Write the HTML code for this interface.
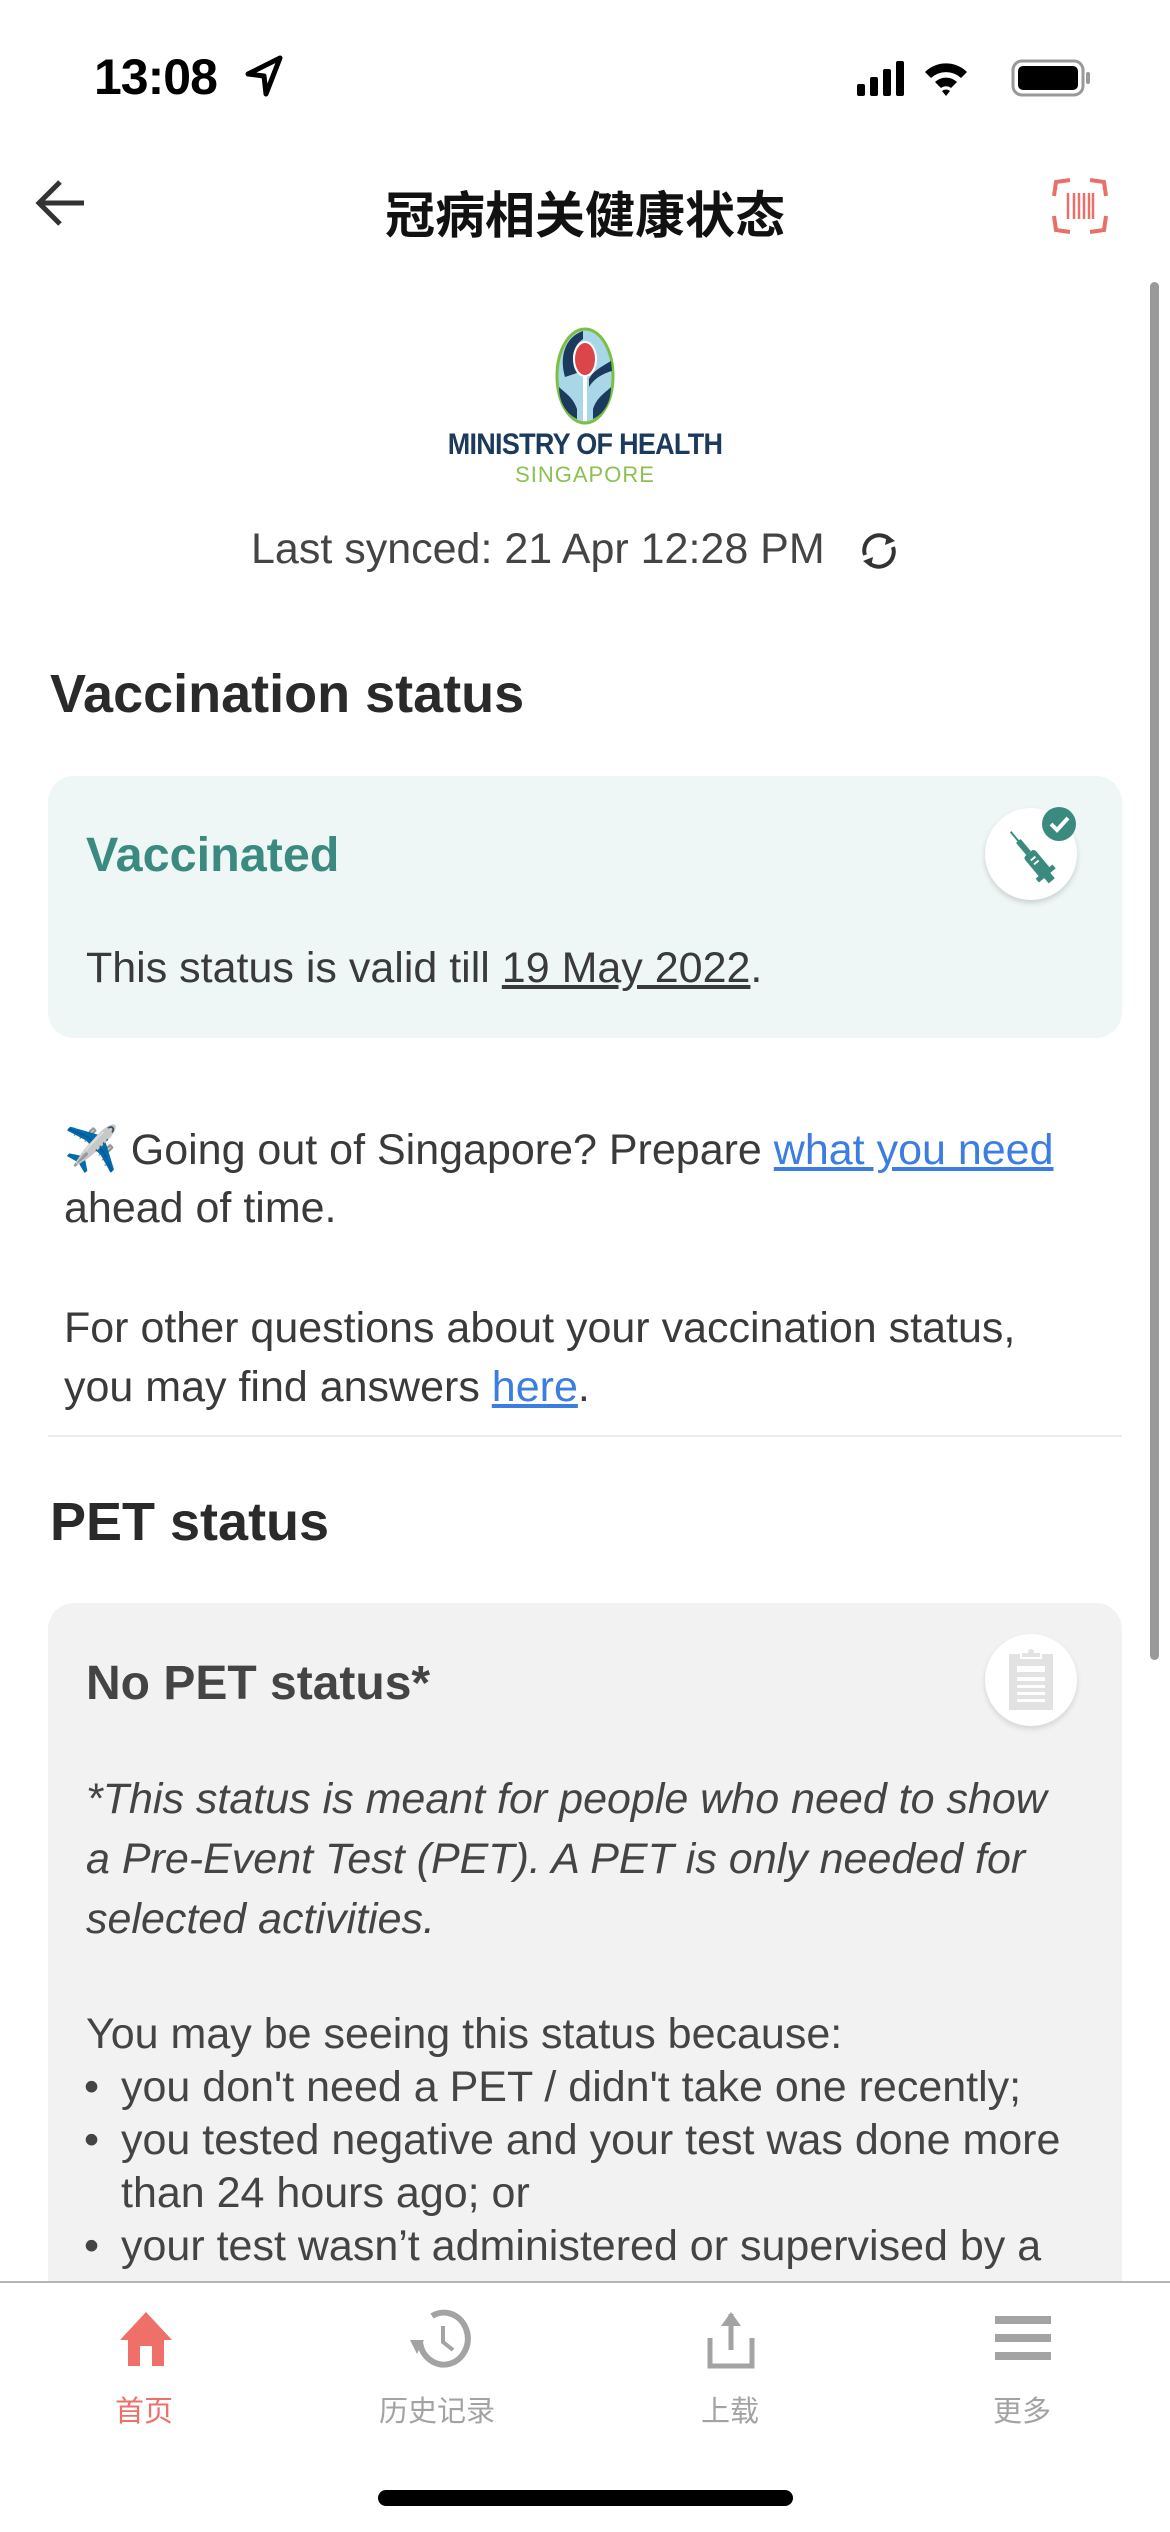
<!DOCTYPE html>
<html><head><meta charset="utf-8"><style>
*{margin:0;padding:0;box-sizing:border-box}
body{width:1170px;height:2532px;background:#fff;position:relative;overflow:hidden;font-family:"Liberation Sans","Noto Sans CJK SC",sans-serif;color:#333}
.a{position:absolute;white-space:nowrap}
.t{font-size:43px;color:#3a3a3a}
a{color:#3b7de0;text-decoration:underline}
</style></head><body>
<!-- status bar -->
<div class="a" style="left:94px;top:48px;font-size:50px;font-weight:bold;color:#000;letter-spacing:-1px">13:08</div>
<svg class="a" style="left:244px;top:54px" width="40" height="44" viewBox="0 0 40 44"><path d="M36 4 L4 20 L20 22 L22 40 Z" fill="none" stroke="#000" stroke-width="5" stroke-linejoin="round"/></svg>
<svg class="a" style="left:855px;top:58px" width="240" height="40" viewBox="0 0 240 40">
<rect x="2" y="26" width="8" height="12" rx="2" fill="#000"/><rect x="15" y="19" width="8" height="19" rx="2" fill="#000"/><rect x="28" y="11" width="8" height="27" rx="2" fill="#000"/><rect x="41" y="3" width="8" height="35" rx="2" fill="#000"/>
<path d="M70 14 A30 30 0 0 1 112 14 L106 20 A22 22 0 0 0 76 20Z M80 24 A16 16 0 0 1 102 24 L96 30 A8 8 0 0 0 86 30Z M91 38 L87 33 A6 6 0 0 1 95 33Z" fill="#000"/>
<rect x="158" y="3" width="70" height="34" rx="9" fill="none" stroke="#999" stroke-width="3"/><rect x="163" y="8" width="60" height="24" rx="5" fill="#000"/><rect x="231" y="14" width="4" height="12" rx="2" fill="#999"/></svg>
<!-- header -->
<svg class="a" style="left:34px;top:178px" width="54" height="50" viewBox="0 0 54 50"><path d="M50 25 H6 M26 4 L5 25 L26 46" fill="none" stroke="#333" stroke-width="5"/></svg>
<div class="a" style="left:0;width:1170px;text-align:center;top:176px;font-size:50px;font-weight:bold;color:#111">冠病相关健康状态</div>
<svg class="a" style="left:1050px;top:176px" width="60" height="60" viewBox="0 0 60 60"><path d="M20 4 L6 6 L4 20 M40 4 L54 6 L56 20 M4 40 L6 54 L20 56 M56 40 L54 54 L40 56" fill="none" stroke="#e87068" stroke-width="4"/><g stroke="#e87068" stroke-width="2.5"><path d="M18 17V43M24 17V43M29 17V43M34 17V43M39 17V43M43 17V43"/></g></svg>
<div class="a" style="left:1150px;top:282px;width:9px;height:1378px;background:#9a9a9a;border-radius:5px"></div>
<!-- logo -->
<svg class="a" style="left:555px;top:327px" width="60" height="98" viewBox="0 0 60 98">
<ellipse cx="30" cy="49" rx="28" ry="47" fill="#a9d7e8" stroke="#7bc043" stroke-width="3"/>
<path d="M28 4 C10 10 4 30 10 50 L22 46 C16 36 16 20 28 12Z" fill="#1b3a5c"/>
<path d="M4 60 C10 66 18 70 22 82 L22 92 C10 86 4 74 4 60Z M56 60 C50 66 42 70 38 82 L38 92 C50 86 56 74 56 60Z" fill="#1b3a5c"/>
<path d="M56 34 C46 40 38 44 34 52 L34 60 C40 50 50 46 57 44Z" fill="#1b3a5c"/>
<ellipse cx="30" cy="32" rx="11" ry="17" fill="#dc4549" stroke="#fff" stroke-width="2"/>
<rect x="28" y="50" width="4" height="44" fill="#fff"/></svg>
<div class="a" style="left:0;width:1170px;text-align:center;top:428px;font-size:30px;font-weight:bold;color:#1b3a5c;letter-spacing:-0.8px;transform:scaleX(0.9)">MINISTRY OF HEALTH</div>
<div class="a" style="left:0;width:1170px;text-align:center;top:462px;font-size:22px;color:#8cc152;letter-spacing:1px">SINGAPORE</div>
<div class="a t" style="left:251px;top:525px;color:#444">Last synced: 21 Apr 12:28 PM</div>
<svg class="a" style="left:855px;top:527px" width="48" height="48" viewBox="0 0 48 48"><path d="M10 28 A15 15 0 0 1 36 14 M38 20 A15 15 0 0 1 12 34" fill="none" stroke="#333" stroke-width="4"/><path d="M32 8 L40 14 L30 18Z M16 40 L8 34 L18 30Z" fill="#333"/></svg>
<!-- vaccination -->
<div class="a" style="left:50px;top:663px;font-size:54px;font-weight:bold;color:#2a2a2a">Vaccination status</div>
<div class="a" style="left:48px;top:776px;width:1074px;height:262px;background:#eef7f5;border-radius:26px"></div>
<div class="a" style="left:86px;top:827px;font-size:48.5px;font-weight:bold;color:#3b8a80">Vaccinated</div>
<div class="a t" style="left:86px;top:944px">This status is valid till <u>19 May 2022</u>.</div>
<div class="a" style="left:985px;top:808px;width:92px;height:92px;border-radius:50%;background:#fff;box-shadow:0 3px 6px rgba(0,0,0,.15)"></div>
<svg class="a" style="left:995px;top:816px" width="80" height="80" viewBox="0 0 80 80"><g transform="rotate(-40 38 44)"><rect x="32" y="36" width="14" height="26" rx="3" fill="#3b8a80"/><rect x="36" y="20" width="6" height="16" fill="#3b8a80"/><rect x="38" y="8" width="2" height="14" fill="#3b8a80"/><rect x="28" y="60" width="22" height="5" fill="#3b8a80"/><rect x="35" y="64" width="8" height="8" fill="#3b8a80"/><rect x="36" y="42" width="6" height="2" fill="#fff"/><rect x="36" y="47" width="6" height="2" fill="#fff"/></g></svg>
<svg class="a" style="left:1041px;top:806px" width="36" height="36" viewBox="0 0 36 36"><circle cx="18" cy="18" r="17" fill="#3b8a80"/><path d="M10 18 L16 24 L27 12" fill="none" stroke="#fff" stroke-width="4"/></svg>
<div class="a t" style="left:64px;top:1123px"><span style="font-size:44px">✈️</span> Going out of Singapore? Prepare <a>what you need</a></div>
<div class="a t" style="left:64px;top:1184px">ahead of time.</div>
<div class="a t" style="left:64px;top:1304px">For other questions about your vaccination status,</div>
<div class="a t" style="left:64px;top:1363px">you may find answers <a>here</a>.</div>
<div class="a" style="left:48px;top:1435px;width:1074px;height:2px;background:#ececec"></div>
<!-- PET -->
<div class="a" style="left:50px;top:1491px;font-size:54px;font-weight:bold;color:#2a2a2a">PET status</div>
<div class="a" style="left:48px;top:1603px;width:1074px;height:700px;background:#f2f2f2;border-radius:26px"></div>
<div class="a" style="left:86px;top:1656px;font-size:48px;font-weight:bold;color:#444">No PET status*</div>
<div class="a" style="left:985px;top:1634px;width:92px;height:92px;border-radius:50%;background:#fff;box-shadow:0 3px 6px rgba(0,0,0,.12)"></div>
<svg class="a" style="left:1001px;top:1644px" width="60" height="72" viewBox="0 0 60 72"><rect x="8" y="10" width="44" height="56" fill="#e2e2e2"/><path d="M20 14 V8 H26 A4 4 0 0 1 34 8 H40 V14Z" fill="#e2e2e2" stroke="#fff" stroke-width="2"/><g fill="#fff"><rect x="16" y="22" width="28" height="6"/><rect x="16" y="33" width="28" height="4"/><rect x="16" y="41" width="28" height="3"/><rect x="16" y="48" width="28" height="3"/><rect x="16" y="55" width="28" height="3"/></g></svg>
<div class="a t" style="left:86px;top:1769px;font-style:italic;line-height:60px;color:#444">*This status is meant for people who need to show<br>a Pre-Event Test (PET). A PET is only needed for<br>selected activities.</div>
<div class="a t" style="left:86px;top:2010px;color:#444">You may be seeing this status because:</div>
<div class="a t" style="left:84px;top:2061px;line-height:53px;color:#444">•<br>•<br><br>•</div>
<div class="a t" style="left:121px;top:2061px;line-height:53px;color:#444">you don't need a PET / didn't take one recently;<br>you tested negative and your test was done more</div>
<div class="a t" style="left:121px;top:2167px;line-height:53px;color:#444">than 24 hours ago; or<br>your test wasn’t administered or supervised by a</div>
<!-- nav -->
<div class="a" style="left:0;top:2281px;width:1170px;height:251px;background:#fff;border-top:2px solid #b5b5b5"></div>
<svg class="a" style="left:118px;top:2310px" width="56" height="58" viewBox="0 0 56 58"><path d="M28 2 L2 30 H10 V56 H22 V36 H34 V56 H46 V30 H54Z" fill="#ee7068"/></svg>
<svg class="a" style="left:408px;top:2306px" width="64" height="66" viewBox="0 0 64 66"><path d="M12 36 A24 26 0 1 0 24 10" fill="none" stroke="#a3a3a3" stroke-width="6"/><path d="M2 34 L16 34 L9 48Z" fill="#a3a3a3"/><path d="M35 20 V36 L45 44" fill="none" stroke="#a3a3a3" stroke-width="4"/></svg>
<svg class="a" style="left:705px;top:2310px" width="52" height="60" viewBox="0 0 52 60"><path d="M26 4 V40" stroke="#a3a3a3" stroke-width="5"/><path d="M16 16 L26 2 L36 16Z" fill="#a3a3a3"/><path d="M5 28 V56 H47 V28" fill="none" stroke="#a3a3a3" stroke-width="5"/></svg>
<svg class="a" style="left:995px;top:2314px" width="56" height="50" viewBox="0 0 56 50"><rect x="0" y="2" width="56" height="8" fill="#a3a3a3"/><rect x="0" y="20" width="56" height="8" fill="#a3a3a3"/><rect x="0" y="38" width="56" height="8" fill="#a3a3a3"/></svg>
<div class="a" style="left:115px;top:2388px;font-size:29px;color:#ee7068">首页</div>
<div class="a" style="left:379px;top:2388px;font-size:29px;color:#a3a3a3">历史记录</div>
<div class="a" style="left:701px;top:2388px;font-size:29px;color:#a3a3a3">上载</div>
<div class="a" style="left:993px;top:2388px;font-size:29px;color:#a3a3a3">更多</div>
<div class="a" style="left:378px;top:2490px;width:415px;height:16px;background:#000;border-radius:8px"></div>
</body></html>
